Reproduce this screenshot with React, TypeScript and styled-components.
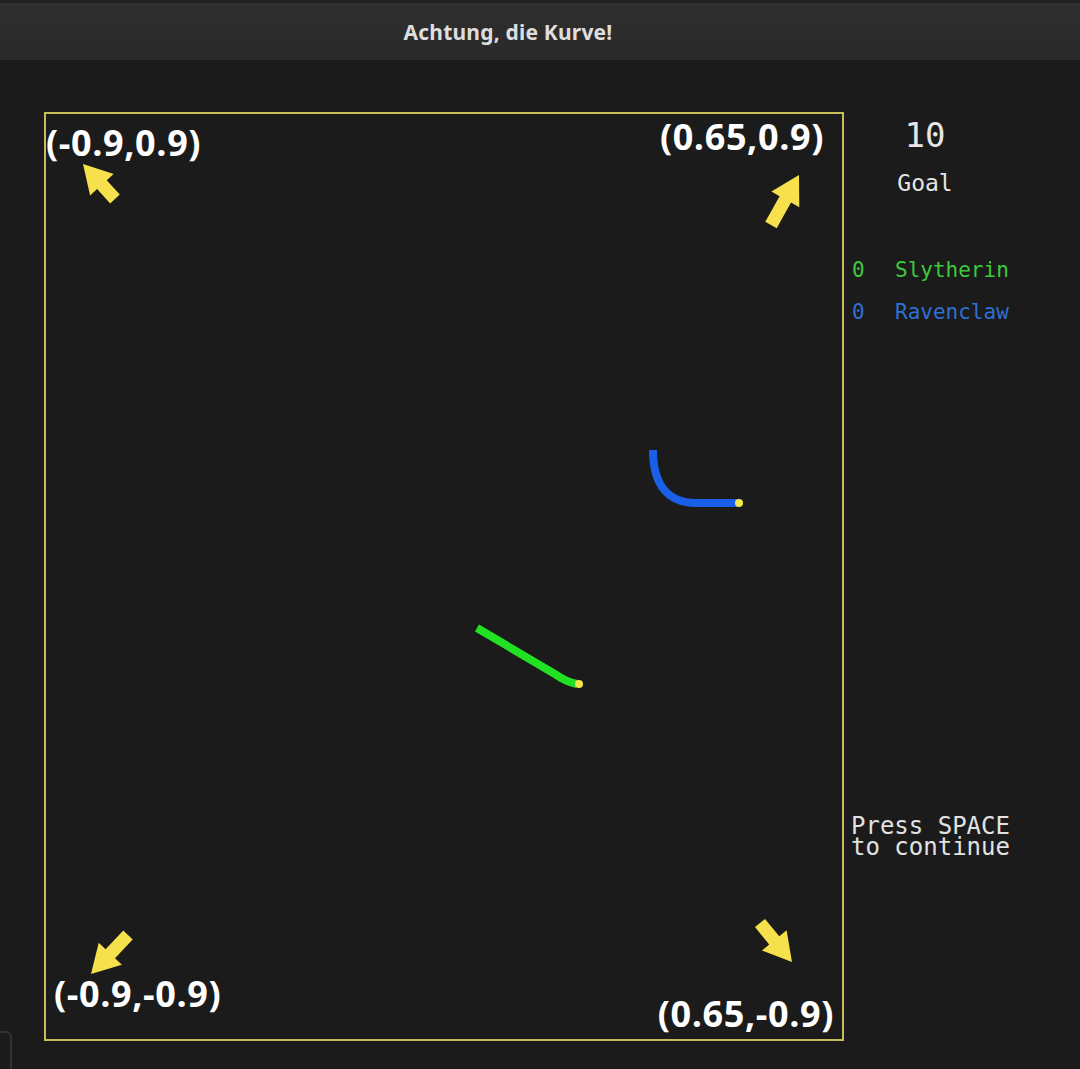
import React from "react";
import styled, { createGlobalStyle } from "styled-components";

const GlobalStyle = createGlobalStyle`
  html, body { margin: 0; padding: 0; background: #1b1b1b; overflow: hidden; }
  #root { width: 1080px; height: 1069px; }
`;

const Window = styled.div`
  width: 1080px;
  height: 1069px;
  display: flex;
  flex-direction: column;
  background: #1b1b1b;
  position: relative;
`;

const TitleBar = styled.header`
  height: 57px;
  border-top: 3px solid #202020;
  background: linear-gradient(#302f2f, #2a2929);
  display: flex;
  align-items: center;
  justify-content: center;
  padding-right: 64px;
  color: #dedede;
  font-family: "Noto Sans", "DejaVu Sans", sans-serif;
  font-weight: 700;
  font-size: 21px;
  letter-spacing: 0.2px;
`;

const Main = styled.main`
  display: flex;
  padding: 52px 0 0 44px;
`;

const Arena = styled.section`
  box-sizing: border-box;
  width: 800px;
  height: 929px;
  border: 2px solid #c5bf58;
  position: relative;
  flex-shrink: 0;
`;

const Canvas = styled.svg`
  position: absolute;
  inset: 0;
  width: 100%;
  height: 100%;
  overflow: visible;
`;

const CornerLabel = styled.span<{ $top: number; $left?: number; $right?: number }>`
  position: absolute;
  top: ${(p) => p.$top}px;
  ${(p) => (p.$left !== undefined ? `left: ${p.$left}px;` : "")}
  ${(p) => (p.$right !== undefined ? `right: ${p.$right}px;` : "")}
  color: #ffffff;
  font-family: "Open Sans", "Noto Sans", sans-serif;
  font-weight: 700;
  font-size: 36px;
  line-height: 1;
  letter-spacing: 0.6px;
  white-space: nowrap;
`;

const SidePanel = styled.aside`
  display: flex;
  flex-direction: column;
  padding-left: 7px;
  font-family: "DejaVu Sans Mono", "Liberation Mono", monospace;
  color: #e2e2e2;
`;

const GoalBlock = styled.div`
  width: 148px;
  display: flex;
  flex-direction: column;
  align-items: center;
  margin-top: 6px;
`;

const GoalNumber = styled.div`
  font-size: 34px;
  line-height: 34px;
  font-weight: 300;
  color: #e6e6e6;
`;

const GoalLabel = styled.div`
  font-size: 23px;
  line-height: 23px;
  margin-top: 20px;
  color: #e6e6e6;
`;

const ScoreList = styled.div`
  display: flex;
  flex-direction: column;
  margin-top: 54px;
`;

const ScoreRow = styled.div<{ $color: string }>`
  display: flex;
  font-size: 21px;
  line-height: 42px;
  color: ${(p) => p.$color};
`;

const ScoreValue = styled.span`
  width: 43px;
  padding-left: 1px;
`;

const PressHint = styled.div`
  margin-top: 483px;
  font-size: 24px;
  line-height: 21px;
  color: #e2e2e2;
  white-space: pre;
`;

const CornerTab = styled.div`
  position: absolute;
  left: -8px;
  top: 1031px;
  width: 16px;
  height: 50px;
  border: 2px solid #333333;
  border-radius: 6px;
`;

type Pt = [number, number];

function arrowPoints(tip: Pt, tail: Pt, headLen = 28, headHalf = 16, shaftHalf = 6.5): string {
  const dx = tip[0] - tail[0];
  const dy = tip[1] - tail[1];
  const len = Math.hypot(dx, dy);
  const ux = dx / len;
  const uy = dy / len;
  const nx = -uy;
  const ny = ux;
  const bx = tip[0] - ux * headLen;
  const by = tip[1] - uy * headLen;
  const pts: Pt[] = [
    [tip[0], tip[1]],
    [bx + nx * headHalf, by + ny * headHalf],
    [bx + nx * shaftHalf, by + ny * shaftHalf],
    [tail[0] + nx * shaftHalf, tail[1] + ny * shaftHalf],
    [tail[0] - nx * shaftHalf, tail[1] - ny * shaftHalf],
    [bx - nx * shaftHalf, by - ny * shaftHalf],
    [bx - nx * headHalf, by - ny * headHalf],
  ];
  return pts.map((p) => `${p[0].toFixed(1)},${p[1].toFixed(1)}`).join(" ");
}

const arrows: { tip: Pt; tail: Pt }[] = [
  { tip: [83, 164], tail: [115, 199] },
  { tip: [799, 175], tail: [771, 225] },
  { tip: [91, 974], tail: [128, 935] },
  { tip: [792, 962], tail: [760, 923] },
];

const players = [
  { score: 0, name: "Slytherin", color: "#3ec83e" },
  { score: 0, name: "Ravenclaw", color: "#2f70d4" },
];

export default function App() {
  return (
    <>
      <GlobalStyle />
      <Window>
        <TitleBar>Achtung, die Kurve!</TitleBar>
        <Main>
          <Arena>
            <Canvas>
              <g transform="translate(-46,-114)">
                <path
                  d="M653,450 C653,486 669,503 696,503 L738,503"
                  stroke="#1a5fe8"
                  strokeWidth={8}
                  fill="none"
                />
                <circle cx={739} cy={503} r={4} fill="#f3e84a" />
                <path
                  d="M477,628 L555,674 Q566,682 577,684"
                  stroke="#22e122"
                  strokeWidth={8}
                  fill="none"
                />
                <circle cx={579} cy={684} r={4} fill="#f3e84a" />
                {arrows.map((a, i) => (
                  <polygon key={i} points={arrowPoints(a.tip, a.tail)} fill="#f6e04b" />
                ))}
              </g>
            </Canvas>
            <CornerLabel $top={11} $left={0}>(-0.9,0.9)</CornerLabel>
            <CornerLabel $top={5} $right={18}>(0.65,0.9)</CornerLabel>
            <CornerLabel $top={862} $left={8}>(-0.9,-0.9)</CornerLabel>
            <CornerLabel $top={882} $right={8}>(0.65,-0.9)</CornerLabel>
          </Arena>
          <SidePanel>
            <GoalBlock>
              <GoalNumber>10</GoalNumber>
              <GoalLabel>Goal</GoalLabel>
            </GoalBlock>
            <ScoreList>
              {players.map((p) => (
                <ScoreRow key={p.name} $color={p.color}>
                  <ScoreValue>{p.score}</ScoreValue>
                  <span>{p.name}</span>
                </ScoreRow>
              ))}
            </ScoreList>
            <PressHint>{"Press SPACE\nto continue"}</PressHint>
          </SidePanel>
        </Main>
        <CornerTab />
      </Window>
    </>
  );
}
